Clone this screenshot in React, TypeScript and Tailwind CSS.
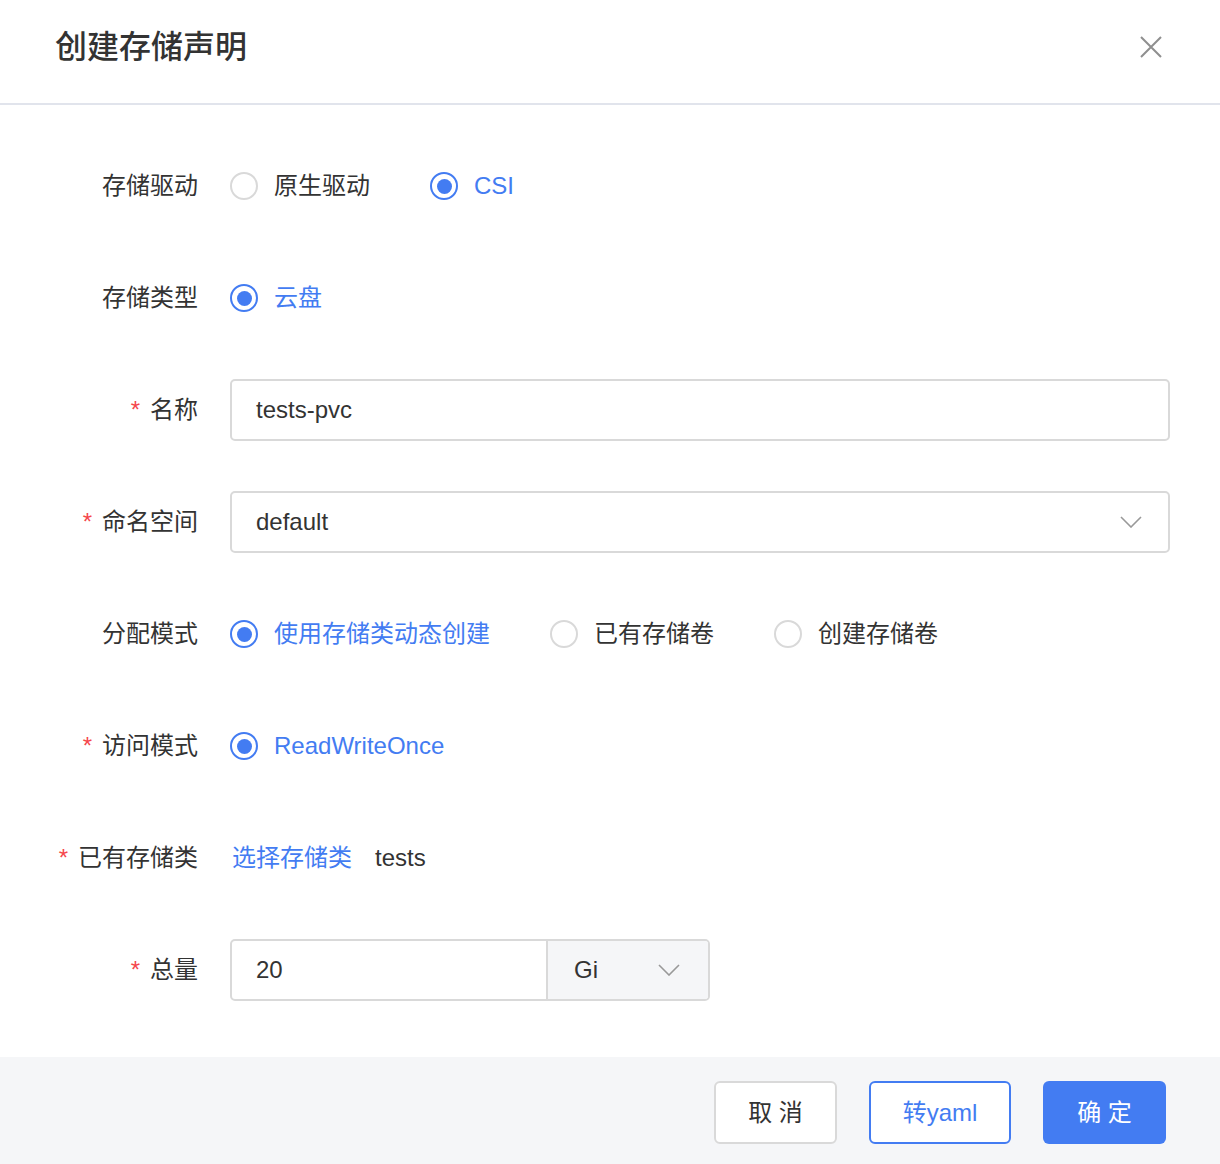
import React from "react";

const font = {
  fontFamily: '"Liberation Sans", "Noto Sans CJK SC", sans-serif',
};

function Radio({ label, checked }: { label: string; checked?: boolean }) {
  return (
    <label className="flex items-center gap-4 cursor-pointer">
      <span
        className={[
          "w-[28px] h-[28px] rounded-full border-2 flex items-center justify-center bg-white flex-shrink-0",
          checked ? "border-[#437cf2]" : "border-[#d9d9d9]",
        ].join(" ")}
      >
        {checked && <span className="w-[15px] h-[15px] rounded-full bg-[#437cf2]" />}
      </span>
      <span className={checked ? "text-[#437cf2]" : "text-[#333]"}>{label}</span>
    </label>
  );
}

function Chevron() {
  return (
    <svg width="22" height="12" viewBox="0 0 22 12" fill="none">
      <path d="M1 1l10 10L21 1" stroke="#999" strokeWidth="1.6" />
    </svg>
  );
}

function Row({
  label,
  required,
  children,
}: {
  label: string;
  required?: boolean;
  children: React.ReactNode;
}) {
  return (
    <div className="flex items-center h-[62px]">
      <div className="w-[198px] flex-shrink-0 text-right text-[#333]">
        {required && <span className="text-[#f5464c] mr-[10px]">*</span>}
        {label}
      </div>
      <div className="ml-[32px] flex-1 flex items-center">{children}</div>
    </div>
  );
}

export default function App() {
  return (
    <div className="w-[1220px] h-[1164px] flex flex-col bg-white text-[24px]" style={font}>
      <div className="h-[105px] flex-shrink-0 border-b-2 border-[#e1e4ec] flex items-center justify-between pl-[55px] pr-[58px]">
        <h1 className="text-[32px] font-medium text-[#333] leading-none -mt-[10px]">创建存储声明</h1>
        <button className="-mt-[10px]">
          <svg width="22" height="22" viewBox="0 0 22 22" fill="none">
            <path d="M1 1l20 20M21 1L1 21" stroke="#8f8f8f" strokeWidth="2" />
          </svg>
        </button>
      </div>

      <div className="flex-1 pt-[50px] pr-[50px] flex flex-col gap-[50px]">
        <Row label="存储驱动">
          <div className="flex items-center gap-[60px]">
            <Radio label="原生驱动" />
            <Radio label="CSI" checked />
          </div>
        </Row>
        <Row label="存储类型">
          <Radio label="云盘" checked />
        </Row>
        <Row label="名称" required>
          <div className="w-full h-[62px] border-2 border-[#d9d9d9] rounded-[5px] flex items-center px-[24px] text-[#333]">
            tests-pvc
          </div>
        </Row>
        <Row label="命名空间" required>
          <div className="w-full h-[62px] border-2 border-[#d9d9d9] rounded-[5px] flex items-center justify-between pl-[24px] pr-[26px] text-[#333]">
            <span>default</span>
            <Chevron />
          </div>
        </Row>
        <Row label="分配模式">
          <div className="flex items-center gap-[60px]">
            <Radio label="使用存储类动态创建" checked />
            <Radio label="已有存储卷" />
            <Radio label="创建存储卷" />
          </div>
        </Row>
        <Row label="访问模式" required>
          <Radio label="ReadWriteOnce" checked />
        </Row>
        <Row label="已有存储类" required>
          <span className="text-[#437cf2] ml-[2px]">选择存储类</span>
          <span className="text-[#333] ml-[23px]">tests</span>
        </Row>
        <Row label="总量" required>
          <div className="w-[480px] h-[62px] border-2 border-[#d9d9d9] rounded-[5px] flex overflow-hidden text-[#333]">
            <div className="flex-1 flex items-center px-[24px]">20</div>
            <div className="w-[162px] border-l-2 border-[#d9d9d9] bg-[#f5f6f8] flex items-center justify-between pl-[26px] pr-[28px]">
              <span>Gi</span>
              <Chevron />
            </div>
          </div>
        </Row>
      </div>

      <div className="h-[107px] flex-shrink-0 bg-[#f5f6f8] flex items-start justify-end gap-[32px] pt-[24px] pr-[54px]">
        <button className="w-[123px] h-[63px] border-2 border-[#d9d9d9] bg-white rounded-[6px] text-[#333]">
          取 消
        </button>
        <button className="w-[142px] h-[63px] border-2 border-[#437cf2] bg-white rounded-[6px] text-[#437cf2]">
          转yaml
        </button>
        <button className="w-[123px] h-[63px] bg-[#437cf2] rounded-[6px] text-white">
          确 定
        </button>
      </div>
    </div>
  );
}
